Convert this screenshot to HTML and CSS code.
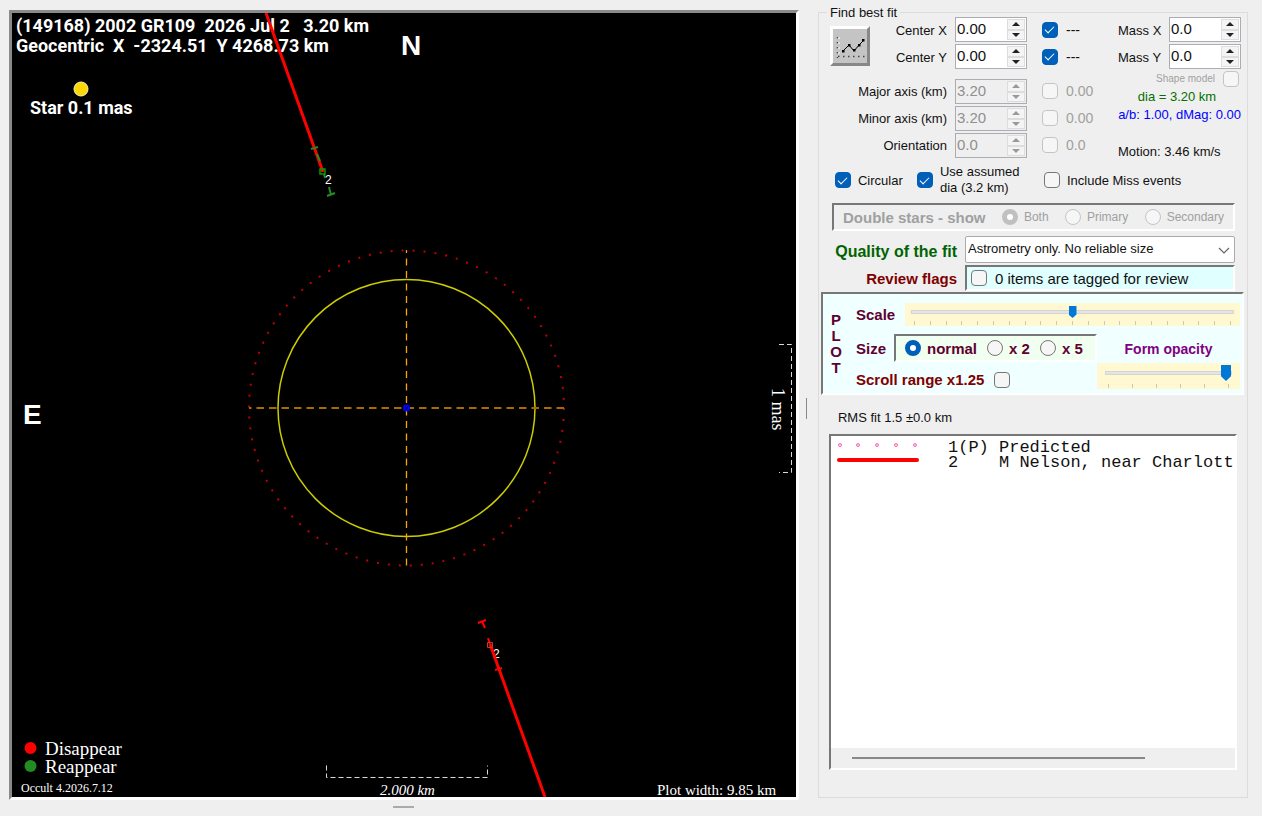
FILE: index.html
```
<!DOCTYPE html>
<html lang="en">
<head>
    <meta charset="UTF-8">
    <meta name="viewport" content="width=device-width, initial-scale=1.0">
    <title>Occult - Plot of observations</title>
    <link rel="stylesheet" href="styles.css">
</head>
<body>
    <div class="plot-pane">
        <div class="plot-frame">
            <svg class="plot" viewBox="12 13 784 784">
                <!-- header -->
                <g class="plot-title">
                    <text x="16" y="32">(149168) 2002 GR109  2026 Jul 2   3.20 km</text>
                    <text x="16" y="52">Geocentric  X  -2324.51  Y 4268.73 km</text>
                </g>
                <text class="compass" x="401" y="55">N</text>
                <text class="compass" x="23" y="424">E</text>
                <circle cx="81" cy="89" r="7" fill="#ffd700" stroke="#f5f0c8" />
                <text class="star-label" x="30" y="114">Star 0.1 mas</text>

                <!-- asteroid outline -->
                <circle cx="406.500" cy="408" r="157.500" fill="none" stroke="#c00000" stroke-width="2" stroke-dasharray="2 9" />
                <circle cx="406.500" cy="408" r="128.500" fill="none" stroke="#cccc00" stroke-width="1.500" />
                <path d="M249 408H564" stroke="#a86c00" stroke-width="2" stroke-dasharray="7.500 5" stroke-dashoffset="5" />
                <path d="M406.500 250V566" stroke="#ffa500" stroke-width="1.300" stroke-dasharray="7 5.500" stroke-dashoffset="4" />
                <circle cx="406.500" cy="408" r="2.500" fill="#000080" stroke="#00f" stroke-width="2" />

                <!-- chord 2 -->
                <path d="M266 13L323 172" stroke="#f00" stroke-width="3" />
                <path d="M311 149L318 147M317 154L320 161M324 174l1 4M329 187l2 8M327 196l8-3" fill="none" stroke="#228b22" stroke-width="2" />
                <path d="M320 169h5v5h-5z" fill="none" stroke="#00a000" stroke-width="1.500" />
                <text class="chord-no" x="325" y="184">2</text>
                <text class="chord-no" x="493" y="658">2</text>
                <path d="M490 644L545 797" stroke="#f00" stroke-width="3" />
                <path d="M478 623l8-3M482 621l3 7M488 638l2 6M495 670l7-2" fill="none" stroke="#f00" stroke-width="2" />
                <path d="M487.500 642.500h5v5h-5z" fill="none" stroke="#c83c32" />

                <!-- scale bars -->
                <path d="M326.500 765.500V777.500H487.500V765.500" fill="none" stroke="#ddd" stroke-dasharray="5 3" />
                <path d="M779 344.500H791.500V472.500H779" fill="none" stroke="#ddd" stroke-dasharray="5 3" />
                <text class="scale-km" x="380" y="795">2.000 km</text>
                <text class="scale-mas" transform="translate(772 388) rotate(90)">1 mas</text>

                <!-- key -->
                <circle cx="30.500" cy="748" r="6" fill="#f00" />
                <circle cx="30.500" cy="766" r="6" fill="#228b22" />
                <text class="key" x="45" y="755">Disappear</text>
                <text class="key" x="45" y="773">Reappear</text>
                <text class="version" x="21" y="792">Occult 4.2026.7.12</text>
                <text class="plot-width" x="657" y="795">Plot width: 9.85 km</text>
            </svg>
        </div>
        <div class="grip-h"></div>
    </div>

    <div class="splitter"><div class="grip-v"></div></div>

    <fieldset class="panel">
        <legend>Find best fit</legend>

        <div class="fit">
            <div class="fit-left">
                <button class="chart-button" type="button" aria-label="Fit">
                    <svg width="30" height="28" viewBox="0 0 30 28">
                        <path d="M3.500 5V26" stroke="#fff" stroke-width="2" stroke-dasharray="2 3" />
                        <path d="M2.500 5V26M3 24.500H30" stroke="#444" stroke-width="1.500" stroke-dasharray="1.500 3.500" />
                        <path d="M8 19L14 13L19 19L24 13L29 8" fill="none" stroke="#000" />
                        <path d="M7 18h2.500v2.500h-2.500zM13 12h2.500v2.500h-2.500zM18 17h2.500v2.500h-2.500zM23 12h2.500v2.500h-2.500zM27 7h2.500v2.500h-2.500z" />
                    </svg>
                </button>
                <label for="cx">Center X</label>
                <div class="spin"><input id="cx" type="text" value="0.00"><button type="button" class="up" aria-label="Up"></button><button type="button" class="down" aria-label="Down"></button></div>
                <input type="checkbox" id="fx" checked><label class="val" for="fx">---</label>

                <label for="cy">Center Y</label>
                <div class="spin"><input id="cy" type="text" value="0.00"><button type="button" class="up" aria-label="Up"></button><button type="button" class="down" aria-label="Down"></button></div>
                <input type="checkbox" id="fy" checked><label class="val" for="fy">---</label>

                <label class="wide" for="major">Major axis (km)</label>
                <div class="spin off"><input id="major" type="text" value="3.20" disabled><button type="button" class="up" aria-label="Up" disabled></button><button type="button" class="down" aria-label="Down" disabled></button></div>
                <input type="checkbox" id="fmaj" disabled><label class="val dim" for="fmaj">0.00</label>

                <label class="wide" for="minor">Minor axis (km)</label>
                <div class="spin off"><input id="minor" type="text" value="3.20" disabled><button type="button" class="up" aria-label="Up" disabled></button><button type="button" class="down" aria-label="Down" disabled></button></div>
                <input type="checkbox" id="fmin" disabled><label class="val dim" for="fmin">0.00</label>

                <label class="wide" for="orient">Orientation</label>
                <div class="spin off"><input id="orient" type="text" value="0.0" disabled><button type="button" class="up" aria-label="Up" disabled></button><button type="button" class="down" aria-label="Down" disabled></button></div>
                <input type="checkbox" id="fori" disabled><label class="val dim" for="fori">0.0</label>
            </div>

            <div class="fit-right">
                <div class="mass">
                    <label for="mx">Mass X</label>
                    <div class="spin"><input id="mx" type="text" value="0.0"><button type="button" class="up" aria-label="Up"></button><button type="button" class="down" aria-label="Down"></button></div>
                </div>
                <div class="mass">
                    <label for="my">Mass Y</label>
                    <div class="spin"><input id="my" type="text" value="0.0"><button type="button" class="up" aria-label="Up"></button><button type="button" class="down" aria-label="Down"></button></div>
                </div>
                <div class="shape">
                    <label for="shape">Shape model</label>
                    <input type="checkbox" id="shape" disabled>
                </div>
                <div class="dia">dia = 3.20 km</div>
                <div class="ratio">a/b: 1.00, dMag: 0.00</div>
                <div class="motion">Motion: 3.46 km/s</div>
            </div>
        </div>

        <div class="options">
            <input type="checkbox" id="circular" checked><label class="circular" for="circular">Circular</label>
            <input type="checkbox" id="assumed" checked><label class="assumed" for="assumed">Use assumed<br>dia (3.2 km)</label>
            <input type="checkbox" id="miss"><label for="miss">Include Miss events</label>
        </div>

        <div class="doubles sunken">
            <b>Double stars - show</b>
            <label><input type="radio" name="dbl" checked disabled>Both</label>
            <label><input type="radio" name="dbl" disabled>Primary</label>
            <label><input type="radio" name="dbl" disabled>Secondary</label>
        </div>

        <div class="quality">
            <label class="q-label" for="quality">Quality of the fit</label>
            <div class="select">
                <select id="quality"><option>Astrometry only. No reliable size</option></select>
                <svg width="12" height="7" viewBox="0 0 12 7"><path d="M1 1L6 6L11 1" fill="none" stroke="#666" stroke-width="1.200" /></svg>
            </div>
            <span class="r-label">Review flags</span>
            <div class="review sunken"><input type="checkbox" id="review"><label for="review">0 items are tagged for review</label></div>
        </div>

        <div class="plot-opts sunken">
            <div class="letters"><span>P</span><span>L</span><span>O</span><span>T</span></div>
            <div class="scale-row">
                <label for="scale">Scale</label>
                <div class="slider">
                    <input type="range" id="scale" min="0" max="20" value="10">
                    <div class="ticks"><i></i><i></i><i></i><i></i><i></i><i></i><i></i><i></i><i></i><i></i><i></i><i></i><i></i><i></i><i></i><i></i><i></i><i></i><i></i><i></i><i></i></div>
                </div>
            </div>
            <div class="size-col">
                <div class="size-row">
                    <span>Size</span>
                    <div class="sizes sunken">
                        <label><input type="radio" name="size" checked>normal</label>
                        <label><input type="radio" name="size">x 2</label>
                        <label><input type="radio" name="size">x 5</label>
                    </div>
                </div>
                <div class="scroll-row"><label for="scroll">Scroll range x1.25</label><input type="checkbox" id="scroll"></div>
            </div>
            <div class="opacity-col">
                <label for="opacity">Form opacity</label>
                <div class="slider big">
                    <input type="range" id="opacity" min="0" max="5" value="5">
                    <div class="ticks"><i></i><i></i><i></i><i></i><i></i><i></i></div>
                </div>
            </div>
        </div>

        <div class="rms">RMS fit 1.5 ±0.0 km</div>

        <div class="list sunken">
            <ul>
                <li><svg width="84" height="15"><g fill="#ffd0e4" stroke="#ff69b4"><circle cx="5" cy="5" r="1.500" /><circle cx="23" cy="5" r="1.500" /><circle cx="42" cy="5" r="1.500" /><circle cx="61" cy="5" r="1.500" /><circle cx="80" cy="5" r="1.500" /></g></svg>1(P) Predicted</li>
                <li><svg width="84" height="15"><path d="M4 5H82" stroke="#f00" stroke-width="4" stroke-linecap="round" /></svg>2    M Nelson, near Charlott</li>
            </ul>
            <div class="hscroll"><div class="thumb"></div></div>
        </div>
    </fieldset>
</body>
</html>
```
FILE: styles.css
```
* {
    box-sizing: border-box;
}
body {
    display: flex;
    margin: 0;
    padding: 10px 14px 8px 9px;
    background: #efefef;
    color: #111;
    font-family: "Liberation Sans", Arial, sans-serif;
    font-size: 13px;
}
input, select, button {
    margin: 0;
    font-family: inherit;
    font-size: inherit;
    color: inherit;
}
.sunken {
    border: 2px solid #777;
    border-right-color: #fff;
    border-bottom-color: #fff;
}

/* Plot */
.plot-pane {
    flex: 1;
    min-width: 0;
}
.plot-frame {
    border: 3px solid #8a8a8a;
    border-right-color: #fff;
    border-bottom-color: #fff;
    border-radius: 0 0 3px 0;
    background: #000;
}
.plot {
    display: block;
    width: 100%;
    height: auto;
}
.plot text {
    fill: #fff;
    white-space: pre;
}
.plot-title, .star-label {
    font-family: Roboto, sans-serif;
    font-weight: bold;
    font-size: 18px;
}
.compass {
    font-weight: bold;
    font-size: 28px;
}
.chord-no {
    font-size: 12px;
}
.scale-km, .scale-mas, .plot-width, .key, .version {
    font-family: "Liberation Serif", serif;
    font-size: 15px;
}
.scale-km {
    font-style: italic;
}
.scale-mas {
    font-size: 18px;
}
.key {
    font-size: 19px;
}
.version {
    font-size: 12px;
}
.grip-h {
    width: 21px;
    height: 2px;
    margin: 6px auto 0;
    background: #aaa;
}
.splitter {
    display: flex;
    align-items: center;
    width: 19px;
    padding-left: 7px;
}
.grip-v {
    width: 1px;
    height: 21px;
    background: #888;
}

/* Right panel */
.panel {
    display: flex;
    flex-direction: column;
    width: 430px;
    margin: -6px 0 10px;
    padding: 0;
    border: 1px solid #dcdcdc;
}
.panel legend {
    margin-left: 8px;
    padding: 0 3px;
    line-height: 17px;
}
.fit {
    display: flex;
    justify-content: space-between;
    margin: -4px 6px 0 11px;
}
.fit-left {
    display: grid;
    grid-template-columns: 40px 85px 72px 31px 40px;
    grid-template-rows: 25px 25px 33px 25px 25px;
    row-gap: 2px;
    align-items: center;
}
.fit-left label {
    padding: 2px 8px 0 0;
    text-align: right;
}
.fit-left label.val {
    padding: 0 0 0 8px;
    text-align: left;
    font-size: 14px;
}
.fit-left input[type="checkbox"] {
    justify-self: end;
}
.fit-left .wide {
    grid-column: 1 / 3;
}
.fit-left .off, .fit-left .wide, .fit-left .wide ~ input, .fit-left .dim {
    align-self: end;
}
.fit-left .wide, .fit-left .dim {
    line-height: 25px;
}
.fit-left .wide ~ input {
    margin-bottom: 5px;
}
.dim {
    color: #a0a0a0;
}
.chart-button {
    grid-row: 1 / 3;
    align-self: center;
    width: 40px;
    height: 40px;
    margin-top: 6px;
    padding: 3px 0 0;
    background: #c4c4c4;
    border: 3px solid #fff;
    border-right-color: #888;
    border-bottom-color: #888;
}
.spin {
    display: grid;
    grid-template-columns: 1fr 18px;
    grid-template-rows: 1fr 1fr;
    width: 72px;
    height: 25px;
    padding: 1px;
    background: #fff;
    border: 1px solid #acacb4;
}
.spin input {
    grid-row: 1 / 3;
    width: 100%;
    padding: 0 0 3px 0;
    border: 0;
    background: none;
    font-size: 15px;
}
.spin button {
    display: flex;
    align-items: center;
    justify-content: center;
    padding: 0;
    background: #f4f4f4;
    border: 1px solid #ddd;
}
.spin button::after {
    content: "";
    border: 4px solid transparent;
}
.spin .up::after {
    border-top: 0;
    border-bottom-color: #222;
}
.spin .down::after {
    border-bottom: 0;
    border-top-color: #222;
}
.spin.off {
    background: #efefef;
    color: #909090;
}
.off .up::after {
    border-bottom-color: #999;
}
.off .down::after {
    border-top-color: #999;
}

/* Tick boxes and radios */
input[type="checkbox"], input[type="radio"] {
    appearance: none;
    display: flex;
    align-items: center;
    justify-content: center;
    flex: none;
    width: 16px;
    height: 16px;
    background: #f6f6f6;
    border: 1px solid #777;
    border-radius: 4px;
}
input[type="checkbox"]:checked {
    background: #005fb8;
    border-color: #005fb8;
}
input[type="checkbox"]:checked::after {
    content: "";
    width: 8px;
    height: 4px;
    margin-bottom: 2px;
    border: solid #fff;
    border-width: 0 0 1px 1px;
    transform: rotate(-45deg);
}
input[type="radio"] {
    border-radius: 50%;
}
input[type="radio"]:checked {
    border: 5px solid #005fb8;
    background: #fff;
}
input[type="checkbox"]:disabled, input[type="radio"]:disabled {
    border-color: #c4c4c4;
}

.fit-right {
    display: flex;
    flex-direction: column;
    width: 128px;
}
.mass {
    display: flex;
    align-items: center;
    justify-content: space-between;
    height: 25px;
    margin-bottom: 2px;
}
.mass label {
    padding: 2px 0 0 5px;
}
.shape {
    display: flex;
    align-items: center;
    justify-content: flex-end;
    gap: 8px;
    height: 15px;
    padding-right: 2px;
    color: #a0a0a0;
    font-size: 10px;
}
.dia, .ratio {
    margin-top: 2px;
    line-height: 18px;
    color: #007000;
    text-align: center;
}
.ratio {
    margin: 0;
    color: #00f;
    text-align: right;
    white-space: nowrap;
}
.motion {
    margin-top: 20px;
    padding-left: 5px;
    white-space: nowrap;
}
.options {
    display: flex;
    align-items: center;
    gap: 7px;
    height: 32px;
    margin: 5px 0 0 16px;
}
.options .circular {
    width: 52px;
}
.options .assumed {
    width: 97px;
    line-height: 16px;
}
.doubles {
    display: flex;
    align-items: center;
    justify-content: space-between;
    height: 28px;
    margin: 7px 12px 0 13px;
    padding: 0 9px;
    color: #a0a0a0;
    font-size: 12px;
}
.doubles b {
    font-size: 15px;
}
.doubles label {
    display: flex;
    align-items: center;
    gap: 6px;
}
.doubles input[type="radio"]:checked {
    border-color: #c0c0c0;
}
.quality {
    display: grid;
    grid-template-columns: 1fr 270px;
    grid-template-rows: 27px 26px;
    gap: 2px 8px;
    align-items: center;
    margin: 5px 12px 0 13px;
    text-align: right;
}
.q-label, .r-label {
    font-size: 15px;
    font-weight: bold;
    color: #006400;
    white-space: nowrap;
}
.q-label {
    padding-top: 5px;
    font-size: 16px;
}
.r-label {
    color: #800000;
}
.select {
    position: relative;
    height: 27px;
}
.select svg {
    position: absolute;
    top: 11px;
    right: 5px;
    pointer-events: none;
}
.select select {
    appearance: none;
    width: 100%;
    height: 100%;
    padding: 0 2px 2px;
    background: #fff;
    border: 1px solid #aaa;
    border-radius: 2px;
}
.review {
    display: flex;
    align-items: center;
    gap: 8px;
    height: 26px;
    padding-left: 4px;
    background: #e0ffff;
    font-size: 15px;
}

/* Plot options */
.plot-opts {
    display: grid;
    grid-template-columns: 33px 1fr 143px;
    grid-template-rows: 23px 1fr;
    height: 103px;
    margin: 1px 3px 0 2px;
    padding: 9px 2px 4px 0;
    background: #f0ffff;
    font-size: 15px;
    font-weight: bold;
    color: #600030;
}
.letters {
    grid-row: 1 / 3;
    display: flex;
    flex-direction: column;
    align-items: center;
    width: 26px;
    padding-top: 9px;
    line-height: 16px;
}
.scale-row {
    grid-column: 2 / 4;
    display: flex;
    justify-content: space-between;
    align-items: center;
}
.slider {
    width: 335px;
    height: 23px;
    padding: 3px 6px 0;
    background: #fff8d0;
}
.slider input {
    appearance: none;
    display: block;
    width: 100%;
    height: 12px;
    background: none;
}
.slider input::-webkit-slider-runnable-track {
    height: 4px;
    background: #e4e4e4;
    border: 1px solid #d4d4d4;
}
.slider input::-webkit-slider-thumb {
    appearance: none;
    width: 8px;
    height: 12px;
    margin-top: -5px;
    background: #0078d7;
    clip-path: polygon(0 0, 100% 0, 100% 70%, 50% 100%, 0 70%);
}
.ticks {
    display: flex;
    justify-content: space-between;
    padding: 0 3px;
    margin-top: 3px;
}
.ticks i {
    width: 1px;
    height: 4px;
    background: #c8c8c0;
}
.big {
    width: 143px;
    height: 26px;
    padding: 2px 8px 0;
}
.big input {
    height: 16px;
}
.big input::-webkit-slider-thumb {
    width: 10px;
    height: 16px;
    margin-top: -7px;
}
.size-row {
    display: flex;
    align-items: center;
    gap: 8px;
    margin-top: 8px;
}
.sizes {
    display: flex;
    align-items: center;
    gap: 10px;
    height: 28px;
    width: 203px;
    padding-left: 9px;
    background: #f0fff0;
}
.sizes label {
    display: flex;
    align-items: center;
    gap: 6px;
    white-space: nowrap;
}
.scroll-row {
    display: flex;
    align-items: center;
    gap: 10px;
    margin-top: 9px;
    color: #800000;
}
.opacity-col {
    padding-top: 15px;
    text-align: center;
    font-size: 14px;
    color: #800080;
}
.opacity-col .big {
    margin-top: 6px;
}
.rms {
    margin: 15px 0 8px 19px;
    line-height: 16px;
}
.list {
    flex: 1;
    display: flex;
    flex-direction: column;
    margin: 0 10px 27px;
    background: #fff;
    overflow: hidden;
}
.list ul {
    flex: 1;
    margin: 0;
    padding: 4px 0 0 4px;
    list-style: none;
    font-family: "Liberation Mono", monospace;
    font-size: 17px;
    line-height: 15px;
}
.list li {
    display: flex;
    gap: 29px;
    white-space: pre;
}
.list li svg {
    flex: none;
}
.hscroll {
    height: 20px;
    padding: 9px 0 0 21px;
    background: #efefef;
}
.thumb {
    width: 293px;
    height: 2px;
    background: #888;
}
```
